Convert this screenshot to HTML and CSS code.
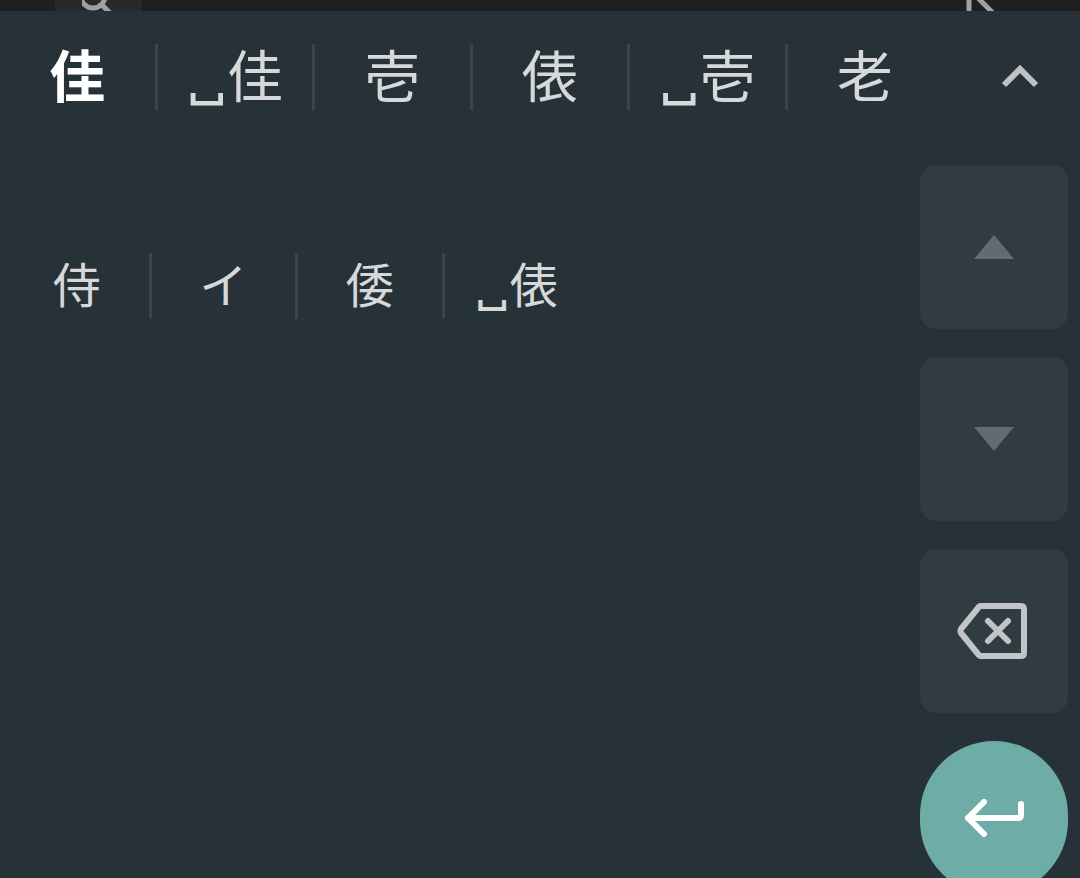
FILE: index.html
```html
<!DOCTYPE html>
<html lang="ja">

<head>
    <meta charset="UTF-8">
    <meta name="viewport" content="width=device-width, initial-scale=1.0">
    <title>変換候補</title>
    <link rel="stylesheet" href="styles.css">
</head>

<body>

    <div class="app">
        <button class="app-search" type="button" aria-label="検索">
            <svg width="34" height="11" viewBox="0 0 34 11">
                <circle cx="11" cy="-4" r="12" />
                <path d="M18 3 L28 13" />
            </svg>
        </button>
        <button class="app-cursor" type="button" aria-label="カーソル">
            <svg width="30" height="11" viewBox="0 0 30 11">
                <path d="M3 14 V-2 M3 -11 L28 14" />
            </svg>
        </button>
    </div>

    <main class="keyboard">
        <div class="top-row">
            <div class="candidates">
                <button type="button" class="selected">佳</button>
                <button type="button"><span class="space">␣</span>佳</button>
                <button type="button">壱</button>
                <button type="button">俵</button>
                <button type="button"><span class="space">␣</span>壱</button>
                <button type="button">老</button>
            </div>
            <button class="close" type="button" aria-label="閉じる">
                <svg width="38" height="24" viewBox="0 0 38 24">
                    <path d="M3 20 L19 4 L35 20" />
                </svg>
            </button>
        </div>

        <div class="panel">
            <div class="candidates more">
                <button type="button">侍</button>
                <button type="button">イ</button>
                <button type="button">倭</button>
                <button type="button"><span class="space">␣</span>俵</button>
            </div>
            <div class="keys">
                <button class="key" type="button" aria-label="上へ" disabled>
                    <svg width="40" height="24" viewBox="0 0 40 24">
                        <path class="arrow" d="M20 0 L40 24 H0 Z" />
                    </svg>
                </button>
                <button class="key" type="button" aria-label="下へ" disabled>
                    <svg width="40" height="24" viewBox="0 0 40 24">
                        <path class="arrow" d="M0 0 H40 L20 24 Z" />
                    </svg>
                </button>
                <button class="key" type="button" aria-label="削除">
                    <svg class="delete" width="74" height="58" viewBox="0 0 74 58">
                        <path d="M24 4 H64 Q67 4 67 7 V51 Q67 54 64 54 H24 Q22 54 21 52 L4 31 Q3 29 4 27 L21 6 Q22 4 24 4 Z" />
                        <path d="M31 19 L51 39 M51 19 L31 39" />
                    </svg>
                </button>
                <button class="key enter" type="button" aria-label="改行">
                    <svg width="60" height="38" viewBox="0 0 60 38">
                        <path d="M20 3 L4 19 L20 35 M4 19 H54 Q57 19 57 16 V5" />
                    </svg>
                </button>
            </div>
        </div>
    </main>

</body>

</html>
```

FILE: styles.css
```css
* {
    box-sizing: border-box;
}

body {
    margin: 0;
    height: 100vh;
    overflow: hidden;
    display: flex;
    flex-direction: column;
    background-color: #273238;
    font-family: "Noto Sans CJK JP", sans-serif;
}

button {
    margin: 0;
    padding: 0;
    border: 0;
    background: none;
    color: #d6d8da;
    font-family: inherit;
    display: flex;
    align-items: center;
    justify-content: center;
}

svg {
    fill: none;
    display: block;
}

/* strip of the app above the keyboard */
.app {
    height: 11px;
    flex: none;
    display: flex;
    justify-content: space-between;
    padding: 0 84px 0 55px;
    background-color: #1f1f1f;
    overflow: hidden;
}

.app svg {
    stroke: #a0a0a0;
    stroke-width: 5;
}

.app-search {
    width: 87px;
    background-color: #29292b;
}

.keyboard {
    flex: 1;
    min-height: 0;
}

.top-row {
    display: flex;
    height: 132px;
}

.candidates {
    flex: 1;
    display: grid;
    grid-template-columns: repeat(6, 1fr);
}

.candidates button {
    display: block;
    height: 66px;
    margin-top: 33px;
    padding-bottom: 8px;
    border-right: 3px solid #3a454a;
    font-size: 56px;
    line-height: 58px;
    text-align: center;
    white-space: nowrap;
}

.candidates button:last-child {
    border-right-color: transparent;
}

.candidates .selected {
    color: #fff;
    font-weight: bold;
}

.space {
    font-family: Inter, "Liberation Mono", monospace;
}

.close {
    width: 121px;
    height: 132px;
    margin-left: 14px;
}

.close svg {
    stroke: #bfc1c5;
    stroke-width: 6;
}

.panel {
    display: flex;
    padding-right: 12px;
}

.more {
    padding: 77px 36px 0 5px;
}

.more button {
    font-size: 48px;
}

.keys {
    width: 148px;
    padding-top: 22px;
    display: flex;
    flex-direction: column;
    gap: 28px;
}

.key {
    height: 164px;
    border-radius: 16px;
    background-color: #313c42;
}

.arrow {
    fill: #616b71;
}

.delete {
    stroke: #c1c5c8;
    stroke-width: 6;
    stroke-linecap: round;
}

.enter {
    height: 154px;
    border-radius: 77px;
    background-color: #6eaca8;
}

.enter svg {
    stroke: #fff;
    stroke-width: 6;
    stroke-linecap: round;
    stroke-linejoin: round;
}
```
